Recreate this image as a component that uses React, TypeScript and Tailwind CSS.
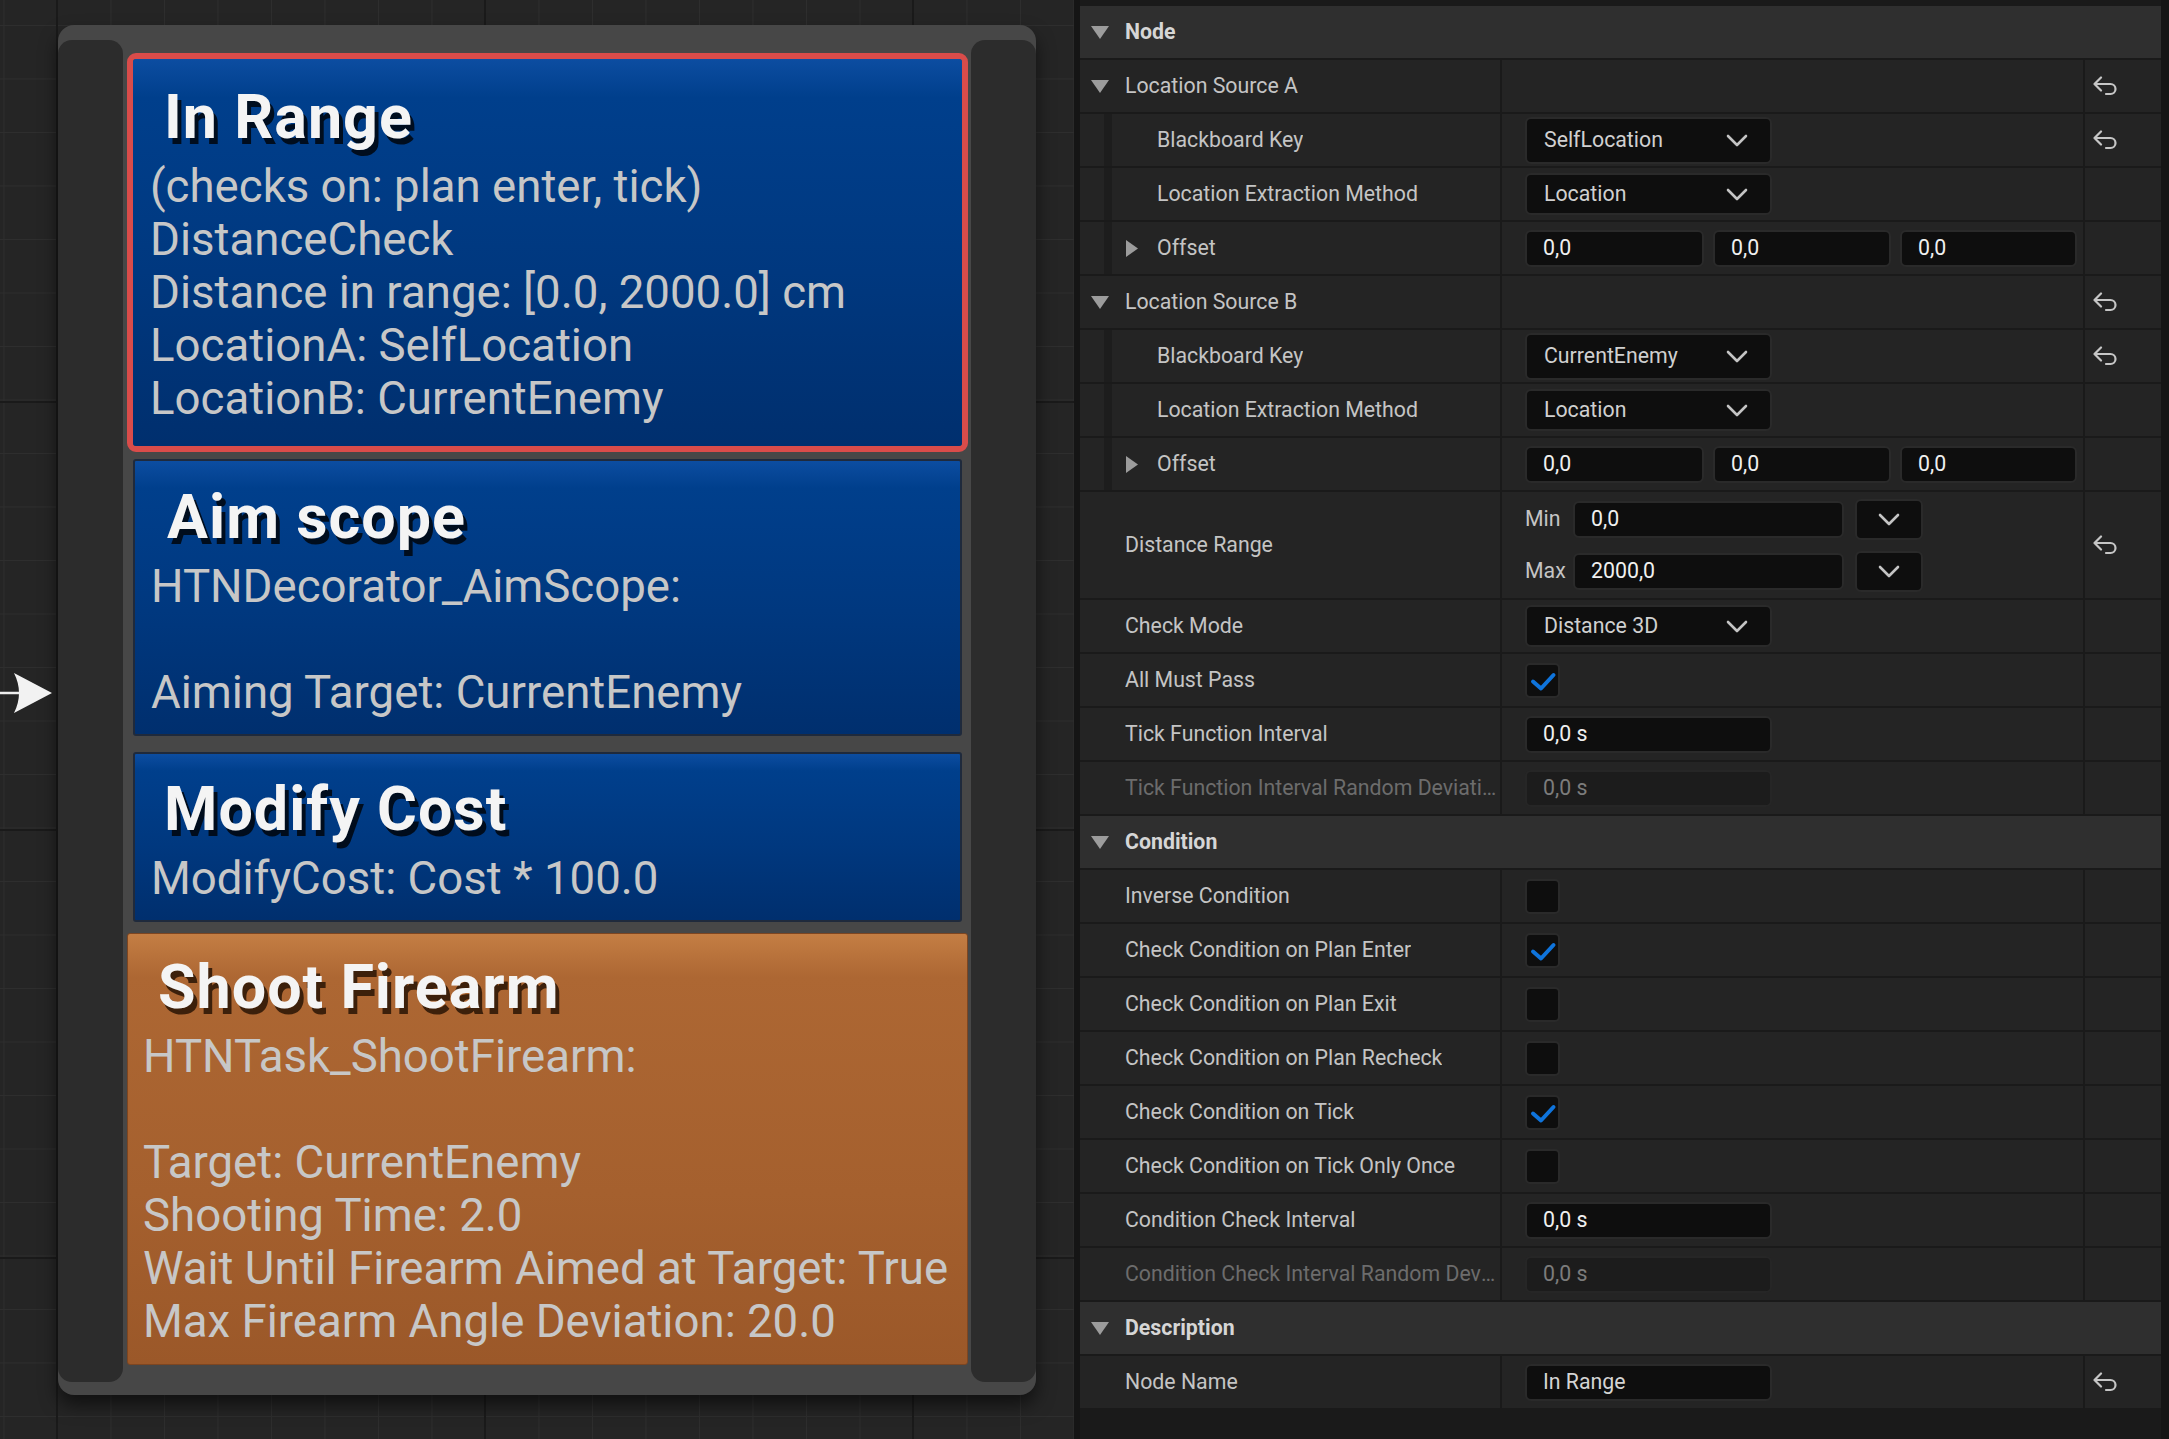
import React from "react";

// graph grid: minor cells ~53.5px, darker major line every 8 cells
const gridBg =
  "[background-color:#252525] [background-image:linear-gradient(to_right,#1a1a1a_2px,transparent_2px),linear-gradient(to_bottom,#1a1a1a_2px,transparent_2px),linear-gradient(to_right,#2e2e2e_1px,transparent_1px),linear-gradient(to_bottom,#2e2e2e_1px,transparent_1px)] [background-size:428px_100%,100%_428px,53.5px_100%,100%_53.5px] [background-position:56px_0,0_401px,57px_0,0_25px]";

const blueCard =
  "bg-[linear-gradient(180deg,#0c4da1_0%,#003f8c_10%,#00387f_55%,#002f6e_100%)]";
const orangeCard =
  "bg-[linear-gradient(180deg,#c47e44_0%,#ad6733_10%,#a5602e_60%,#9b5829_100%)]";

function Title({ children, shadow }: { children: React.ReactNode; shadow: string }) {
  return (
    <div className={`text-[61px] leading-[70px] font-bold tracking-[1px] text-[#f4f4f4] whitespace-nowrap ${shadow}`}>
      {children}
    </div>
  );
}

function Body({ lines }: { lines: string[] }) {
  return (
    <div className="mt-[8px] text-[45.6px] leading-[53px] text-[#c7c7c7] whitespace-nowrap">
      {lines.map((l, i) =>
        l === "" ? <div key={i} className="h-[53px]" /> : <div key={i}>{l}</div>
      )}
    </div>
  );
}

function EntryArrow() {
  return (
    <svg width="54" height="42" viewBox="0 0 54 42">
      <path d="M0 21 H26" stroke="#eeeeee" strokeWidth="2.5" />
      <path d="M14 1 L52 21 L14 41 Q24 21 14 1 Z" fill="#f2f2f2" />
    </svg>
  );
}

function Graph() {
  const navyShadow = "[text-shadow:4px_6px_0_rgba(0,0,0,0.78)]";
  const brownShadow = "[text-shadow:4px_6px_0_rgba(40,20,5,0.85)]";
  return (
    <div className={`relative w-[1074px] h-[1439px] shrink-0 pt-[25px] pl-[58px] ${gridBg}`}>
      <div className="absolute left-0 top-[672px]">
        <EntryArrow />
      </div>
      <div className="flex w-[978px] bg-[#474747] rounded-[16px] shadow-[0_10px_18px_rgba(0,0,0,0.55)]">
        <div className="w-[65px] shrink-0 mt-[15px] mb-[13px] bg-[#2c2c2c] rounded-[14px]" />
        <div className="w-[848px] shrink-0 flex flex-col pt-[28px] pb-[30px] pl-[4px] pr-[3px]">
          {/* selected decorator */}
          <div className="h-[399px] shrink-0 border-[6px] border-[#d94c4a] rounded-[9px]">
            <div className={`h-full rounded-[3px] pt-[23px] ${blueCard}`}>
              <div className="pl-[31px]">
                <Title shadow={navyShadow}>In Range</Title>
              </div>
              <div className="pl-[17px]">
                <Body
                  lines={[
                    "(checks on: plan enter, tick)",
                    "DistanceCheck",
                    "Distance in range: [0.0, 2000.0] cm",
                    "LocationA: SelfLocation",
                    "LocationB: CurrentEnemy",
                  ]}
                />
              </div>
            </div>
          </div>

          <div className={`h-[277px] shrink-0 mt-[7px] mx-[6px] rounded-[3px] border-2 border-[#1f2a3c] pt-[21px] ${blueCard}`}>
            <div className="pl-[32px]">
              <Title shadow={navyShadow}>Aim scope</Title>
            </div>
            <div className="pl-[16px]">
              <Body lines={["HTNDecorator_AimScope:", "", "Aiming Target: CurrentEnemy"]} />
            </div>
          </div>

          <div className={`h-[170px] shrink-0 mt-[16px] mx-[6px] rounded-[3px] border-2 border-[#1f2a3c] pt-[20px] ${blueCard}`}>
            <div className="pl-[29px]">
              <Title shadow={navyShadow}>Modify Cost</Title>
            </div>
            <div className="pl-[16px]">
              <Body lines={["ModifyCost: Cost * 100.0"]} />
            </div>
          </div>

          <div className={`h-[432px] shrink-0 mt-[11px] rounded-[3px] border border-[#7e4621] pt-[18px] ${orangeCard}`}>
            <div className="pl-[30px]">
              <Title shadow={brownShadow}>Shoot Firearm</Title>
            </div>
            <div className="pl-[15px]">
              <Body
                lines={[
                  "HTNTask_ShootFirearm:",
                  "",
                  "Target: CurrentEnemy",
                  "Shooting Time: 2.0",
                  "Wait Until Firearm Aimed at Target: True",
                  "Max Firearm Angle Deviation: 20.0",
                ]}
              />
            </div>
          </div>
        </div>
        <div className="w-[65px] shrink-0 mt-[15px] mb-[13px] bg-[#2c2c2c] rounded-[14px]" />
      </div>
    </div>
  );
}

/* ---------- details panel ---------- */

function DownTri() {
  return (
    <svg width="18" height="13" viewBox="0 0 18 13" className="shrink-0">
      <polygon points="0,0 18,0 9,13" fill="#9c9c9c" />
    </svg>
  );
}

function RightTri() {
  return (
    <svg width="12" height="17" viewBox="0 0 12 17" className="shrink-0">
      <polygon points="0,0 12,8.5 0,17" fill="#9c9c9c" />
    </svg>
  );
}

function Chevron() {
  return (
    <svg width="22" height="13" viewBox="0 0 22 13" className="shrink-0">
      <path
        d="M2 2 L11 11 L20 2"
        fill="none"
        stroke="#c4c4c4"
        strokeWidth="2.6"
        strokeLinecap="round"
        strokeLinejoin="round"
      />
    </svg>
  );
}

function ResetIcon() {
  return (
    <svg width="26" height="20" viewBox="0 0 26 20">
      <path
        d="M9 1.5 L2.5 8 L9 14.5 M2.5 8 H18.5 a5 5 0 0 1 0 10 H14"
        fill="none"
        stroke="#c6c6c6"
        strokeWidth="2.2"
        strokeLinecap="round"
        strokeLinejoin="round"
      />
    </svg>
  );
}

function Dropdown({ text, tall }: { text: string; tall?: boolean }) {
  return (
    <div
      className={`flex items-center justify-between w-[247px] ${tall ? "h-[47px]" : "h-[42px]"} bg-[#0e0e0e] border-2 border-[#2a2a2a] rounded-[6px] pl-[17px] pr-[22px]`}
    >
      <span className="text-[21.3px] text-[#d0d0d0]">{text}</span>
      <Chevron />
    </div>
  );
}

function TextBox({ text, className, dim }: { text: string; className: string; dim?: boolean }) {
  return (
    <div
      className={`flex items-center h-[37px] border-2 rounded-[6px] pl-[16px] text-[21.3px] ${
        dim ? "bg-[#1c1c1c] border-[#262626] text-[#7c7c7c]" : "bg-[#0e0e0e] border-[#2a2a2a] text-[#f0f0f0]"
      } ${className}`}
    >
      {text}
    </div>
  );
}

function Checkbox({ checked }: { checked?: boolean }) {
  return (
    <div className="w-[35px] h-[35px] bg-[#0e0e0e] border-2 border-[#2a2a2a] rounded-[5px] relative">
      {checked && (
        <svg width="35" height="35" viewBox="0 0 34 35" className="absolute left-[-2px] top-[-2px]">
          <path
            d="M7.5 18.5 L15.5 25.5 L28 12"
            fill="none"
            stroke="#0f74dc"
            strokeWidth="4"
            strokeLinecap="round"
            strokeLinejoin="round"
          />
        </svg>
      )}
    </div>
  );
}

function Header({ label }: { label: string }) {
  return (
    <div className="flex items-center h-[52px] mb-[2px] bg-[#2f2f2f] pl-[11px] shrink-0">
      <DownTri />
      <span className="ml-[16px] text-[21.3px] font-bold text-[#d6d6d6]">{label}</span>
    </div>
  );
}

function Row({
  label,
  child,
  expander,
  reset,
  dim,
  tall,
  children,
}: {
  label: string;
  child?: boolean;
  expander?: "down" | "right";
  reset?: boolean;
  dim?: boolean;
  tall?: boolean;
  children?: React.ReactNode;
}) {
  return (
    <div className={`flex gap-[2px] ${tall ? "h-[106px]" : "h-[52px]"} mb-[2px] shrink-0`}>
      <div className="w-[420px] shrink-0 flex bg-[#242424]">
        {child && (
          <>
            <div className="w-[24px] shrink-0" />
            <div className="w-[8px] shrink-0 bg-[#1d1d1d]" />
          </>
        )}
        <div className="flex items-center min-w-0 flex-1">
          <div className={`w-[45px] shrink-0 flex items-center ${expander === "right" ? "pl-[14px]" : "pl-[11px]"}`}>
            {expander === "down" && <DownTri />}
            {expander === "right" && <RightTri />}
          </div>
          <span className={`truncate text-[21.3px] ${dim ? "text-[#6c6c6c]" : "text-[#c4c4c4]"}`}>
            {label}
          </span>
        </div>
      </div>
      <div className="w-[581px] shrink-0 flex items-center bg-[#242424] pl-[23px]">{children}</div>
      <div className="w-[76px] shrink-0 flex items-center bg-[#242424] pl-[7px]">{reset && <ResetIcon />}</div>
    </div>
  );
}

function Offsets() {
  return (
    <div className="flex gap-[9px]">
      <TextBox text="0,0" className="w-[179px] h-[36px]" />
      <TextBox text="0,0" className="w-[178px] h-[36px]" />
      <TextBox text="0,0" className="w-[177px] h-[36px]" />
    </div>
  );
}

function RangeLine({ label, value }: { label: string; value: string }) {
  return (
    <div className="flex items-center h-[40px]">
      <span className="w-[48px] shrink-0 text-[21.3px] text-[#c4c4c4]">{label}</span>
      <TextBox text={value} className="w-[271px] h-[36px]" />
      <div className="ml-[11px] w-[68px] h-[41px] flex items-center justify-center bg-[#0e0e0e] border-2 border-[#2a2a2a] rounded-[6px]">
        <Chevron />
      </div>
    </div>
  );
}

function Details() {
  return (
    <div className="ml-[6px] w-[1081px] h-[1439px] shrink-0 flex flex-col bg-[#1a1a1a] pt-[6px]">
      <Header label="Node" />
      <Row label="Location Source A" expander="down" reset />
      <Row label="Blackboard Key" child reset>
        <Dropdown text="SelfLocation" tall />
      </Row>
      <Row label="Location Extraction Method" child>
        <Dropdown text="Location" />
      </Row>
      <Row label="Offset" child expander="right">
        <Offsets />
      </Row>
      <Row label="Location Source B" expander="down" reset />
      <Row label="Blackboard Key" child reset>
        <Dropdown text="CurrentEnemy" tall />
      </Row>
      <Row label="Location Extraction Method" child>
        <Dropdown text="Location" />
      </Row>
      <Row label="Offset" child expander="right">
        <Offsets />
      </Row>
      <Row label="Distance Range" tall reset>
        <div className="flex flex-col gap-[12px]">
          <RangeLine label="Min" value="0,0" />
          <RangeLine label="Max" value="2000,0" />
        </div>
      </Row>
      <Row label="Check Mode">
        <Dropdown text="Distance 3D" />
      </Row>
      <Row label="All Must Pass">
        <Checkbox checked />
      </Row>
      <Row label="Tick Function Interval">
        <TextBox text="0,0 s" className="w-[247px]" />
      </Row>
      <Row label="Tick Function Interval Random Deviation" dim>
        <TextBox text="0,0 s" className="w-[247px]" dim />
      </Row>
      <Header label="Condition" />
      <Row label="Inverse Condition">
        <Checkbox />
      </Row>
      <Row label="Check Condition on Plan Enter">
        <Checkbox checked />
      </Row>
      <Row label="Check Condition on Plan Exit">
        <Checkbox />
      </Row>
      <Row label="Check Condition on Plan Recheck">
        <Checkbox />
      </Row>
      <Row label="Check Condition on Tick">
        <Checkbox checked />
      </Row>
      <Row label="Check Condition on Tick Only Once">
        <Checkbox />
      </Row>
      <Row label="Condition Check Interval">
        <TextBox text="0,0 s" className="w-[247px]" />
      </Row>
      <Row label="Condition Check Interval Random Deviation" dim>
        <TextBox text="0,0 s" className="w-[247px]" dim />
      </Row>
      <Header label="Description" />
      <Row label="Node Name" reset>
        <TextBox text="In Range" className="w-[247px] !text-[#d4d4d4]" />
      </Row>
    </div>
  );
}

export default function App() {
  return (
    <div className="flex w-[2169px] h-[1439px] overflow-hidden bg-[#151515] [font-family:Roboto,sans-serif]">
      <Graph />
      <Details />
    </div>
  );
}
